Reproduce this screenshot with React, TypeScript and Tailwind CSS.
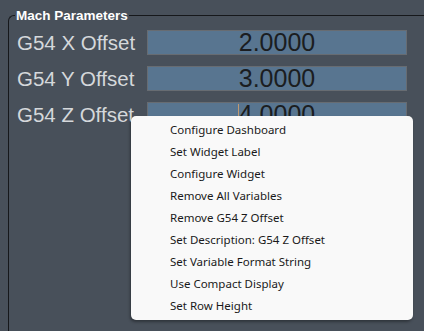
const ROWS = [
  { label: "G54 X Offset", value: "2.0000" },
  { label: "G54 Y Offset", value: "3.0000" },
  { label: "G54 Z Offset", value: "4.0000", caret: true },
];

const MENU_ITEMS = [
  "Configure Dashboard",
  "Set Widget Label",
  "Configure Widget",
  "Remove All Variables",
  "Remove G54 Z Offset",
  "Set Description: G54 Z Offset",
  "Set Variable Format String",
  "Use Compact Display",
  "Set Row Height",
];

export default function App() {
  return (
    <div
      className="relative w-[424px] h-[331px] overflow-hidden bg-[#48505a] pt-[8px] pl-[8px]"
      style={{ fontFamily: '"Liberation Sans", Arial, sans-serif' }}
    >
      {/* Group box */}
      <fieldset className="h-[340px] border-l border-t border-[#16181b] rounded-tl-[6px] pl-[8px] pr-[16px]">
        <legend className="px-px ml-[-2px] text-[13.5px] leading-[15px] font-bold text-white">
          Mach Parameters
        </legend>
        <div className="flex flex-col gap-[11px] mt-[7px]">
          {ROWS.map((row) => (
            <div key={row.label} className="flex items-center">
              <div className="w-[130px] text-[20.5px] leading-[25px] text-[#d5d8db] whitespace-nowrap">
                {row.label}
              </div>
              <div className="relative w-[260px] h-[25px] bg-[#587590] border border-[#676c72] flex items-center justify-center">
                {row.caret && (
                  <div className="absolute left-[90px] top-px bottom-px w-px bg-[#c09a72]" />
                )}
                <span className="text-[25px] leading-[25px] text-[#1b1d20]">{row.value}</span>
              </div>
            </div>
          ))}
        </div>
      </fieldset>

      {/* Context menu */}
      <div
        className="absolute left-[131px] top-[116px] w-[282px] bg-[#f9f9f9] rounded-[5px] py-[3px] shadow-[-1px_2px_3px_rgba(0,0,0,0.35)]"
        style={{ fontFamily: '"Noto Sans", "Open Sans", sans-serif' }}
      >
        {MENU_ITEMS.map((item) => (
          <div key={item} className="h-[22px] pl-[39px] flex items-center text-[11.5px] text-[#1a1a1a]">
            {item}
          </div>
        ))}
      </div>
    </div>
  );
}
